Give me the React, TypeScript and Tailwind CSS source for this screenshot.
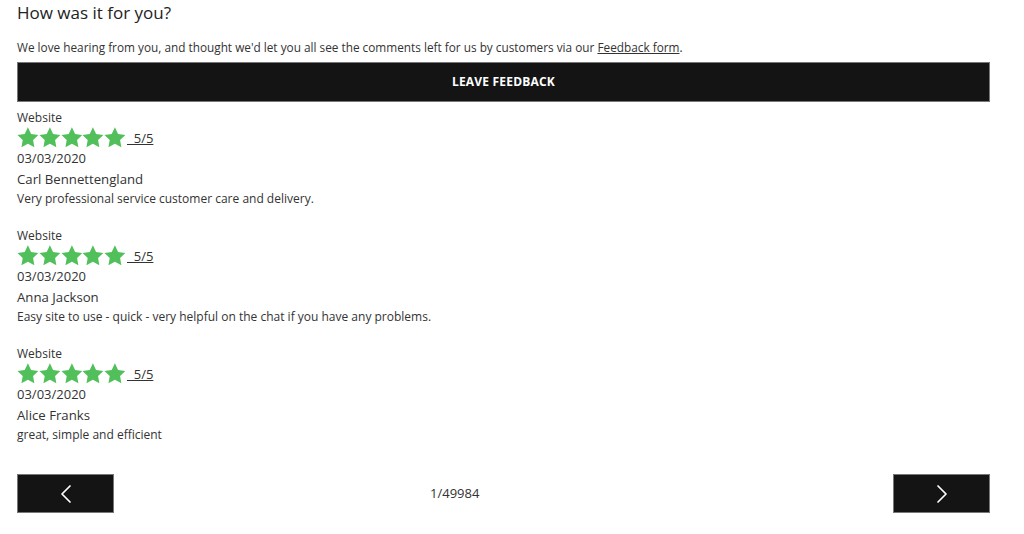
import { ChevronLeft, ChevronRight } from 'lucide-react';

const reviews = [
  { date: '03/03/2020', name: 'Carl Bennettengland', text: 'Very professional service customer care and delivery.' },
  { date: '03/03/2020', name: 'Anna Jackson', text: 'Easy site to use - quick - very helpful on the chat if you have any problems.' },
  { date: '03/03/2020', name: 'Alice Franks', text: 'great, simple and efficient' },
];

function Star() {
  return (
    <svg width="21.8" height="21" viewBox="0 0 24 23" className="shrink-0">
      <path d="M12 0.3l3.5 7.3 8 1.1-5.8 5.5 1.4 7.9L12 18.3l-7.1 3.8 1.4-7.9L0.5 8.7l8-1.1z" fill="#52c05a" />
    </svg>
  );
}

function Review({ r }: { r: typeof reviews[number] }) {
  return (
    <div className="h-[118px] text-[#333]">
      <div className="text-[12px] leading-[16px]">Website</div>
      <div className="flex items-center h-[22px]">
        <div className="flex">
          <Star /><Star /><Star /><Star /><Star />
        </div>
        <span className="text-[13px] underline ml-[1px] mt-[4px] whitespace-pre">{'  5/5'}</span>
      </div>
      <div className="text-[13px] leading-[19px] mt-[1px]">{r.date}</div>
      <div className="text-[13.2px] leading-[22px]">{r.name}</div>
      <div className="text-[12px] leading-[18px]">{r.text}</div>
    </div>
  );
}

export default function App() {
  return (
    <div className="w-[1024px] h-[534px] bg-white px-[17px] pt-[1px]" style={{ fontFamily: '"Open Sans", "Liberation Sans", sans-serif' }}>
      <div className="w-[973px]">
        <h2 className="text-[17px] leading-[22px] text-[#222] mt-[1px]">How was it for you?</h2>
        <p className="text-[11.8px] leading-[16px] text-[#333] mt-[15px]">
          We love hearing from you, and thought we'd let you all see the comments left for us by customers via our{' '}
          <span className="underline">Feedback form</span>.
        </p>
        <button className="mt-[7px] w-full h-[40px] bg-[#141414] border border-[#777] text-white text-[12px] font-bold tracking-[0.2px]">
          LEAVE FEEDBACK
        </button>
        <div className="mt-[8px]">
          {reviews.map((r, i) => <Review key={i} r={r} />)}
        </div>
        <div className="flex items-center mt-[10px]">
          <button className="w-[97px] h-[39px] bg-[#141414] border border-[#777] flex items-center justify-center text-white">
            <ChevronLeft size={32} strokeWidth={1.3} />
          </button>
          <div className="flex-1 pl-[316px] text-[13px] text-[#333]">1/49984</div>
          <button className="w-[97px] h-[39px] bg-[#141414] border border-[#777] flex items-center justify-center text-white">
            <ChevronRight size={32} strokeWidth={1.3} />
          </button>
        </div>
      </div>
    </div>
  );
}
